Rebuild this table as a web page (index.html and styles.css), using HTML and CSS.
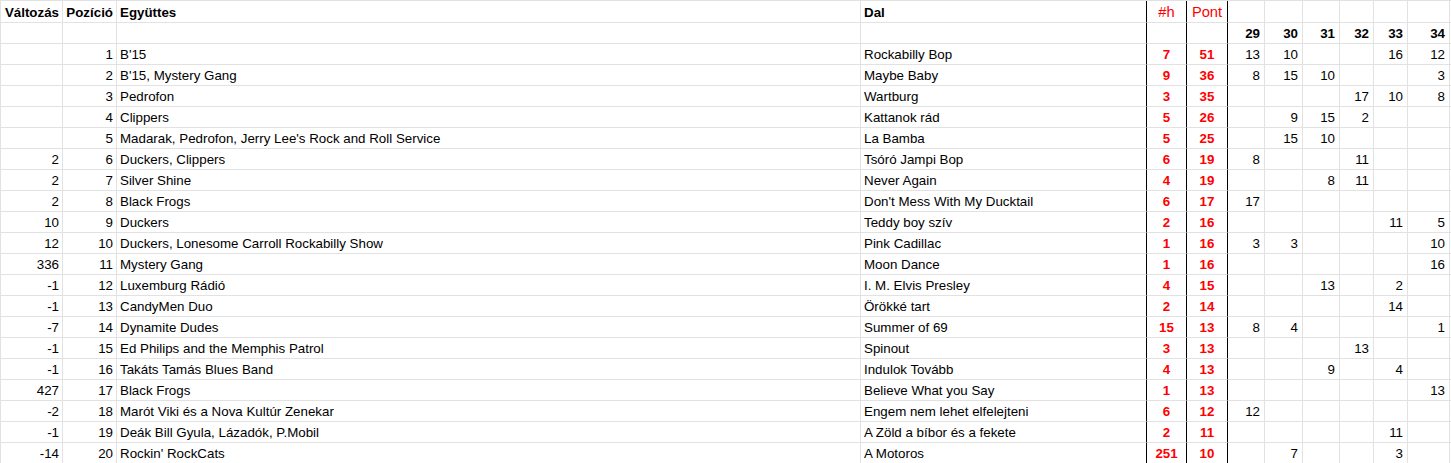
FILE: index.html
```html
<!DOCTYPE html>
<html lang="hu">
<head>
<meta charset="utf-8">
<title>Toplista</title>
<link rel="stylesheet" href="styles.css">
</head>
<body>
<div class="sheet">
  <div class="row head"><span>Változás</span><span>Pozíció</span><span>Együttes</span><span>Dal</span><span>#h</span><span>Pont</span><span></span><span></span><span></span><span></span><span></span><span></span><span></span></div>
  <div class="row weeks"><span></span><span></span><span></span><span></span><span></span><span></span><span>29</span><span>30</span><span>31</span><span>32</span><span>33</span><span>34</span><span></span></div>
  <div class="row"><span></span><span>1</span><span>B'15</span><span>Rockabilly Bop</span><span>7</span><span>51</span><span>13</span><span>10</span><span></span><span></span><span>16</span><span>12</span><span></span></div>
  <div class="row"><span></span><span>2</span><span>B'15, Mystery Gang</span><span>Maybe Baby</span><span>9</span><span>36</span><span>8</span><span>15</span><span>10</span><span></span><span></span><span>3</span><span></span></div>
  <div class="row"><span></span><span>3</span><span>Pedrofon</span><span>Wartburg</span><span>3</span><span>35</span><span></span><span></span><span></span><span>17</span><span>10</span><span>8</span><span></span></div>
  <div class="row"><span></span><span>4</span><span>Clippers</span><span>Kattanok rád</span><span>5</span><span>26</span><span></span><span>9</span><span>15</span><span>2</span><span></span><span></span><span></span></div>
  <div class="row"><span></span><span>5</span><span>Madarak, Pedrofon, Jerry Lee's Rock and Roll Service</span><span>La Bamba</span><span>5</span><span>25</span><span></span><span>15</span><span>10</span><span></span><span></span><span></span><span></span></div>
  <div class="row"><span>2</span><span>6</span><span>Duckers, Clippers</span><span>Tsóró Jampi Bop</span><span>6</span><span>19</span><span>8</span><span></span><span></span><span>11</span><span></span><span></span><span></span></div>
  <div class="row"><span>2</span><span>7</span><span>Silver Shine</span><span>Never Again</span><span>4</span><span>19</span><span></span><span></span><span>8</span><span>11</span><span></span><span></span><span></span></div>
  <div class="row"><span>2</span><span>8</span><span>Black Frogs</span><span>Don't Mess With My Ducktail</span><span>6</span><span>17</span><span>17</span><span></span><span></span><span></span><span></span><span></span><span></span></div>
  <div class="row"><span>10</span><span>9</span><span>Duckers</span><span>Teddy boy szív</span><span>2</span><span>16</span><span></span><span></span><span></span><span></span><span>11</span><span>5</span><span></span></div>
  <div class="row"><span>12</span><span>10</span><span>Duckers, Lonesome Carroll Rockabilly Show</span><span>Pink Cadillac</span><span>1</span><span>16</span><span>3</span><span>3</span><span></span><span></span><span></span><span>10</span><span></span></div>
  <div class="row"><span>336</span><span>11</span><span>Mystery Gang</span><span>Moon Dance</span><span>1</span><span>16</span><span></span><span></span><span></span><span></span><span></span><span>16</span><span></span></div>
  <div class="row"><span>-1</span><span>12</span><span>Luxemburg Rádió</span><span>I. M. Elvis Presley</span><span>4</span><span>15</span><span></span><span></span><span>13</span><span></span><span>2</span><span></span><span></span></div>
  <div class="row"><span>-1</span><span>13</span><span>CandyMen Duo</span><span>Örökké tart</span><span>2</span><span>14</span><span></span><span></span><span></span><span></span><span>14</span><span></span><span></span></div>
  <div class="row"><span>-7</span><span>14</span><span>Dynamite Dudes</span><span>Summer of 69</span><span>15</span><span>13</span><span>8</span><span>4</span><span></span><span></span><span></span><span>1</span><span></span></div>
  <div class="row"><span>-1</span><span>15</span><span>Ed Philips and the Memphis Patrol</span><span>Spinout</span><span>3</span><span>13</span><span></span><span></span><span></span><span>13</span><span></span><span></span><span></span></div>
  <div class="row"><span>-1</span><span>16</span><span>Takáts Tamás Blues Band</span><span>Indulok Tovább</span><span>4</span><span>13</span><span></span><span></span><span>9</span><span></span><span>4</span><span></span><span></span></div>
  <div class="row"><span>427</span><span>17</span><span>Black Frogs</span><span>Believe What you Say</span><span>1</span><span>13</span><span></span><span></span><span></span><span></span><span></span><span>13</span><span></span></div>
  <div class="row"><span>-2</span><span>18</span><span>Marót Viki és a Nova Kultúr Zenekar</span><span>Engem nem lehet elfelejteni</span><span>6</span><span>12</span><span>12</span><span></span><span></span><span></span><span></span><span></span><span></span></div>
  <div class="row"><span>-1</span><span>19</span><span>Deák Bill Gyula, Lázadók, P.Mobil</span><span>A Zöld a bíbor és a fekete</span><span>2</span><span>11</span><span></span><span></span><span></span><span></span><span>11</span><span></span><span></span></div>
  <div class="row"><span>-14</span><span>20</span><span>Rockin' RockCats</span><span>A Motoros</span><span>251</span><span>10</span><span></span><span>7</span><span></span><span></span><span>3</span><span></span><span></span></div>
</div>
</body>
</html>
```
FILE: styles.css
```css
html, body {
  margin: 0;
  padding: 0;
  overflow: hidden;
  background: #fff;
}

.sheet {
  font-family: "Liberation Sans", Arial, sans-serif;
  font-size: 13.333px;
  color: #000;
  border-top: 1px solid #e2e2e2;
  border-left: 1px solid #e2e2e2;
}

.row {
  display: grid;
  grid-template-columns: 62px 54px 744px 286px 40px 41px 37px 38px 37px 34px 34px 42px 1fr;
  height: 21px;
}

.row.head {
  height: 22px;
}

.row > span {
  box-sizing: border-box;
  display: flex;
  align-items: flex-end;
  min-width: 0;
  overflow: hidden;
  white-space: nowrap;
  line-height: 15px;
  padding: 0 3px 2px;
  border-right: 1px solid #e2e2e2;
  border-bottom: 1px solid #e2e2e2;
}

/* numeric columns: right aligned */
.row > span:nth-child(1),
.row > span:nth-child(2),
.row > span:nth-child(n+7) {
  justify-content: flex-end;
}

.row > span:nth-child(n+7) {
  padding-right: 4px;
}

/* #h and Pont: centred, red, bold */
.row > span:nth-child(5),
.row > span:nth-child(6) {
  justify-content: center;
  color: #ff0000;
  font-weight: bold;
}

/* black separators around #h and Pont */
.row > span:nth-child(4),
.row > span:nth-child(5),
.row > span:nth-child(6) {
  border-right-color: #000;
}

.row > span:nth-child(13) {
  border-right: none;
}

/* header row */
.head > span {
  font-weight: bold;
}

.head > span:nth-child(5),
.head > span:nth-child(6) {
  font-weight: normal;
  font-size: 14.667px;
  line-height: 16px;
}

/* week numbers */
.weeks > span:nth-child(n+7) {
  font-weight: bold;
}
```
